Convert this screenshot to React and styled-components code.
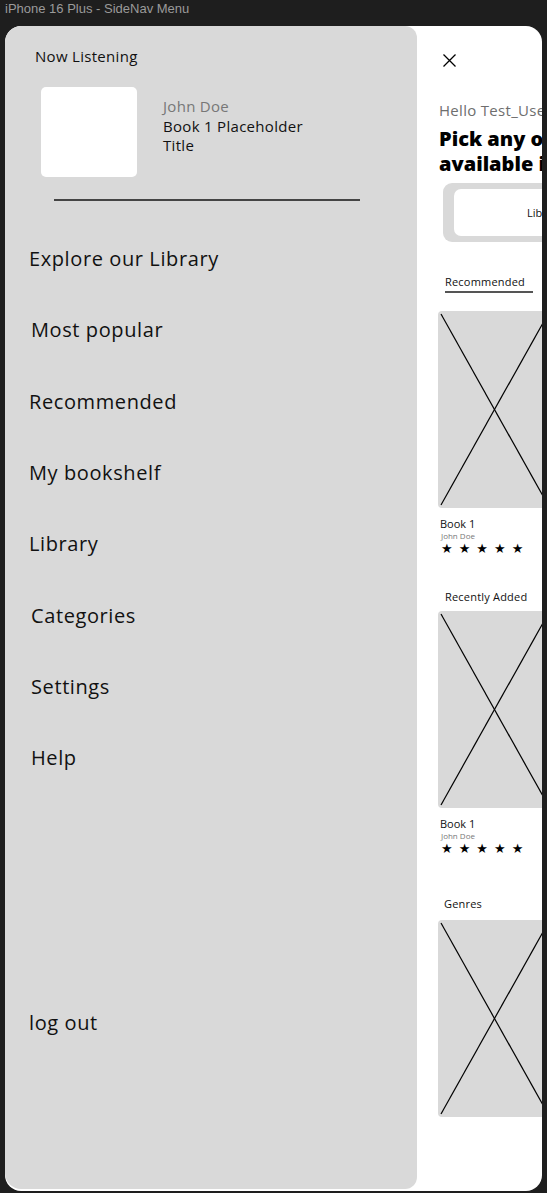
import React from 'react';
import styled, { createGlobalStyle } from 'styled-components';

const GlobalStyle = createGlobalStyle`
  body {
    margin: 0;
    background: #1e1e1e;
    font-family: "Open Sans", "Liberation Sans", sans-serif;
  }
`;

const Page = styled.div`
  width: 547px;
  height: 1193px;
  overflow: hidden;
`;

const FrameLabel = styled.div`
  height: 26px;
  padding-left: 5px;
  box-sizing: border-box;
  font-family: "Liberation Sans", sans-serif;
  font-size: 13px;
  line-height: 17px;
  color: #9a9a9a;
`;

const Frame = styled.div`
  margin-left: 5px;
  width: 537px;
  height: 1165px;
  background: #fff;
  border-radius: 16px;
  overflow: hidden;
  display: flex;
`;

const SideNav = styled.nav`
  flex: 0 0 412px;
  height: 1163px;
  background: #d9d9d9;
  border-radius: 16px 12px 12px 16px;
  padding-top: 20px;
  box-sizing: border-box;
  display: flex;
  flex-direction: column;
`;

const SectionTitle = styled.div`
  margin-left: 30px;
  font-size: 15px;
  line-height: 20px;
  letter-spacing: 0.3px;
  color: #111;
`;

const NowPlaying = styled.div`
  margin: 21px 0 0 36px;
  display: flex;
  align-items: flex-start;
  gap: 26px;
`;

const Cover = styled.div`
  width: 96px;
  height: 90px;
  background: #fff;
  border-radius: 5px;
`;

const TrackInfo = styled.div`
  padding-top: 10px;
  font-size: 15px;
  line-height: 19.5px;
  letter-spacing: 0.3px;
  color: #111;
`;

const Author = styled.div`
  color: #777;
`;

const Divider = styled.hr`
  margin: 22px 0 0 49px;
  width: 306px;
  border: none;
  border-top: 2px solid #444;
`;

const Menu = styled.ul`
  list-style: none;
  margin: 22px 0 0;
  padding: 0;
`;

const MenuItem = styled.li`
  height: 71.3px;
  display: flex;
  align-items: center;
  padding-left: ${p => p.$indent}px;
  font-size: 20px;
  letter-spacing: 0.6px;
  color: #111;
`;

const LogOut = styled.div`
  margin: 216px 0 0 24px;
  font-size: 20px;
  line-height: 28px;
  letter-spacing: 0.6px;
  color: #111;
`;

const Main = styled.main`
  flex: 0 0 auto;
  width: 260px;
  padding-left: 22px;
  box-sizing: border-box;
`;

const CloseButton = styled.button`
  margin: 28px 0 0 4px;
  padding: 0;
  border: none;
  background: none;
  width: 13px;
  height: 13px;
  display: block;
`;

const Greeting = styled.div`
  margin-top: 33px;
  font-size: 15px;
  line-height: 20px;
  letter-spacing: 0.3px;
  color: #6e6e6e;
  white-space: nowrap;
`;

const Heading = styled.h1`
  margin: 7px 0 0;
  font-size: 20px;
  line-height: 24.5px;
  font-weight: 800;
  color: #000;
  white-space: nowrap;
`;

const TabBar = styled.div`
  margin: 7px 0 0 4px;
  width: 200px;
  height: 59px;
  background: #d9d9d9;
  border-radius: 9px;
  padding: 6px 11px;
  box-sizing: border-box;
  display: flex;
`;

const Tab = styled.div`
  flex: 1;
  background: #fff;
  border-radius: 7px;
  display: flex;
  align-items: center;
  padding-left: 73px;
  font-size: 11px;
  color: #111;
`;

const Label = styled.div`
  margin: ${p => p.$top}px 0 0 ${p => p.$left}px;
  font-size: 11px;
  line-height: 14px;
  letter-spacing: 0.2px;
  color: #111;
  white-space: nowrap;
`;

const Underline = styled.div`
  margin: 2px 0 0 6px;
  width: 88px;
  height: 2px;
  background: #555;
`;

const Card = styled.div`
  margin-top: ${p => p.$top}px;
  margin-left: -1px;
  width: 112px;
  height: 197px;
  background: #d9d9d9;
  border-radius: 4px;
`;

const BookTitle = styled.div`
  margin: 9px 0 0 1px;
  font-size: 11px;
  line-height: 14px;
  color: #111;
`;

const BookAuthor = styled.div`
  margin-left: 2px;
  font-size: 8px;
  line-height: 9px;
  color: #777;
`;

const Stars = styled.div`
  margin: 1px 0 0 2px;
  display: flex;
  gap: 6px;
  font-family: "DejaVu Sans", sans-serif;
  font-size: 13px;
  line-height: 15px;
  color: #000;
`;

const Placeholder = ({ top }) => (
  <Card $top={top}>
    <svg width="112" height="197" viewBox="0 0 112 197">
      <line x1="3" y1="3" x2="110" y2="194" stroke="#000" strokeWidth="1.2" />
      <line x1="3" y1="194" x2="110" y2="3" stroke="#000" strokeWidth="1.2" />
    </svg>
  </Card>
);

const BookMeta = () => (
  <>
    <BookTitle>Book 1</BookTitle>
    <BookAuthor>John Doe</BookAuthor>
    <Stars>
      {[0, 1, 2, 3, 4].map(i => <span key={i}>★</span>)}
    </Stars>
  </>
);

const menu = [
  ['Explore our Library', 24],
  ['Most popular', 26],
  ['Recommended', 24],
  ['My bookshelf', 24],
  ['Library', 24],
  ['Categories', 26],
  ['Settings', 26],
  ['Help', 26],
];

const App = () => (
  <Page>
    <GlobalStyle />
    <FrameLabel>iPhone 16 Plus - SideNav Menu</FrameLabel>
    <Frame>
      <SideNav>
        <SectionTitle>Now Listening</SectionTitle>
        <NowPlaying>
          <Cover />
          <TrackInfo>
            <Author>John Doe</Author>
            <div>Book 1 Placeholder</div>
            <div>Title</div>
          </TrackInfo>
        </NowPlaying>
        <Divider />
        <Menu>
          {menu.map(([label, indent]) => (
            <MenuItem key={label} $indent={indent}>{label}</MenuItem>
          ))}
        </Menu>
        <LogOut>log out</LogOut>
      </SideNav>
      <Main>
        <CloseButton aria-label="Close">
          <svg width="13" height="13" viewBox="0 0 13 13">
            <path d="M0.5 0.5L12.5 12.5M12.5 0.5L0.5 12.5" stroke="#000" strokeWidth="1.3" />
          </svg>
        </CloseButton>
        <Greeting>Hello Test_User</Greeting>
        <Heading>
          Pick any one book<br />available in our library
        </Heading>
        <TabBar>
          <Tab>Library</Tab>
        </TabBar>
        <Label $top={33} $left={6}>Recommended</Label>
        <Underline />
        <Placeholder top={18} />
        <BookMeta />
        <Label $top={34} $left={6}>Recently Added</Label>
        <Placeholder top={7} />
        <BookMeta />
        <Label $top={41} $left={5}>Genres</Label>
        <Placeholder top={9} />
      </Main>
    </Frame>
  </Page>
);

export default App;
